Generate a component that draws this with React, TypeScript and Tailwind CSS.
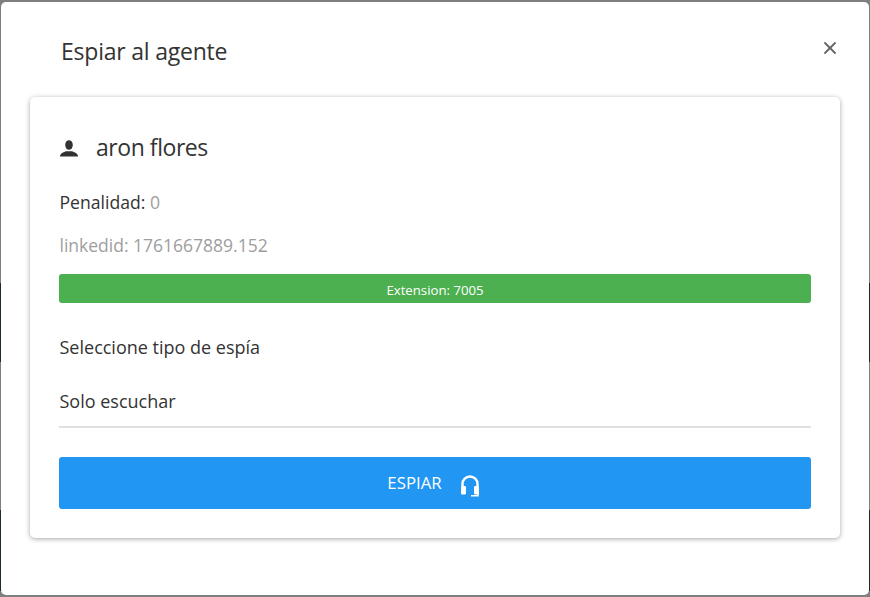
import { X } from "lucide-react";

const font = { fontFamily: '"Open Sans", "Noto Sans", sans-serif' };

const Headset = () => (
  <svg width="20" height="23" viewBox="0 0 20 23" fill="none" className="mt-[4px] -ml-[1px] text-white">
    <path d="M2.500 13V10a7.500 7.500 0 0 1 15 0v3" stroke="currentColor" strokeWidth="2.400" />
    <rect x="1" y="12" width="5" height="8.500" rx="1.200" fill="currentColor" />
    <rect x="14" y="12" width="5" height="8.500" rx="1.200" fill="currentColor" />
    <path d="M18 20v1.700h-7" stroke="currentColor" strokeWidth="1.600" />
  </svg>
);

const PersonIcon = () => (
  <svg width="18" height="18" viewBox="0 0 18 18" fill="#333333" className="mt-[4px]">
    <ellipse cx="9" cy="5" rx="3.800" ry="4.800" />
    <path d="M0 16.500c0-2.800 2.500-4 6-5.200h6c3.500 1.200 6 2.400 6 5.200z" />
  </svg>
);

export default function App() {
  return (
    <div
      className="h-[597px] w-[870px] overflow-hidden bg-[linear-gradient(to_bottom,#7f7f7f_283px,#1d2a30_283px,#1d2a30_362px,#7f7f7f_362px,#7f7f7f_510px,#1d2a30_510px,#1d2a30_591px,#7f7f7f_591px)] px-[1px] py-[2px]"
      style={font}
    >
      <div className="flex h-full flex-col rounded-[5px] bg-white">
        <div className="flex h-[95px] items-start justify-between pl-[60px] pr-[29px]">
          <h2 className="mt-[30px] text-[23px] leading-[38px] tracking-[-0.22px] text-[#333]">Espiar al agente</h2>
          <button className="mt-[36px] text-[#666]">
            <X size={20} strokeWidth={2.200} />
          </button>
        </div>
        <div className="mx-[29px] h-[441px] rounded-[5px] bg-white px-[29px] pt-[30px] shadow-[0_1px_5px_rgba(0,0,0,0.35)]">
          <div className="flex h-[40px] items-center gap-[18px] pl-[1px]">
            <PersonIcon />
            <span className="text-[23px] tracking-[-0.45px] text-[#333]">aron flores</span>
          </div>
          <p className="mt-[21px] pl-[0.500px] text-[17.600px] leading-[28px] text-[#333]">
            Penalidad: <span className="text-[#9e9e9e]">0</span>
          </p>
          <p className="mt-[15px] pl-[0.500px] text-[17.500px] leading-[28px] text-[#9e9e9e]">linkedid: 1761667889.152</p>
          <div className="mt-[15px] flex h-[29px] items-center justify-center rounded-[3px] bg-[#4caf50] pt-[4px] text-[13.200px] text-white">
            Extension: 7005
          </div>
          <p className="mt-[30px] pl-[0.500px] text-[18px] leading-[28px] text-[#333]">Seleccione tipo de espía</p>
          <div className="mt-[26px] h-[28px] pl-[0.500px] text-[18px] leading-[28px] text-[#333]">Solo escuchar</div>
          <div className="mt-[11px] h-[2px] bg-[#e0e0e0]" />
          <button className="mt-[29px] flex h-[52px] w-full items-center justify-center gap-[19px] rounded-[3px] bg-[#2196f3] pr-[3px] text-[16.800px] text-white">
            ESPIAR
            <Headset />
          </button>
        </div>
      </div>
    </div>
  );
}
